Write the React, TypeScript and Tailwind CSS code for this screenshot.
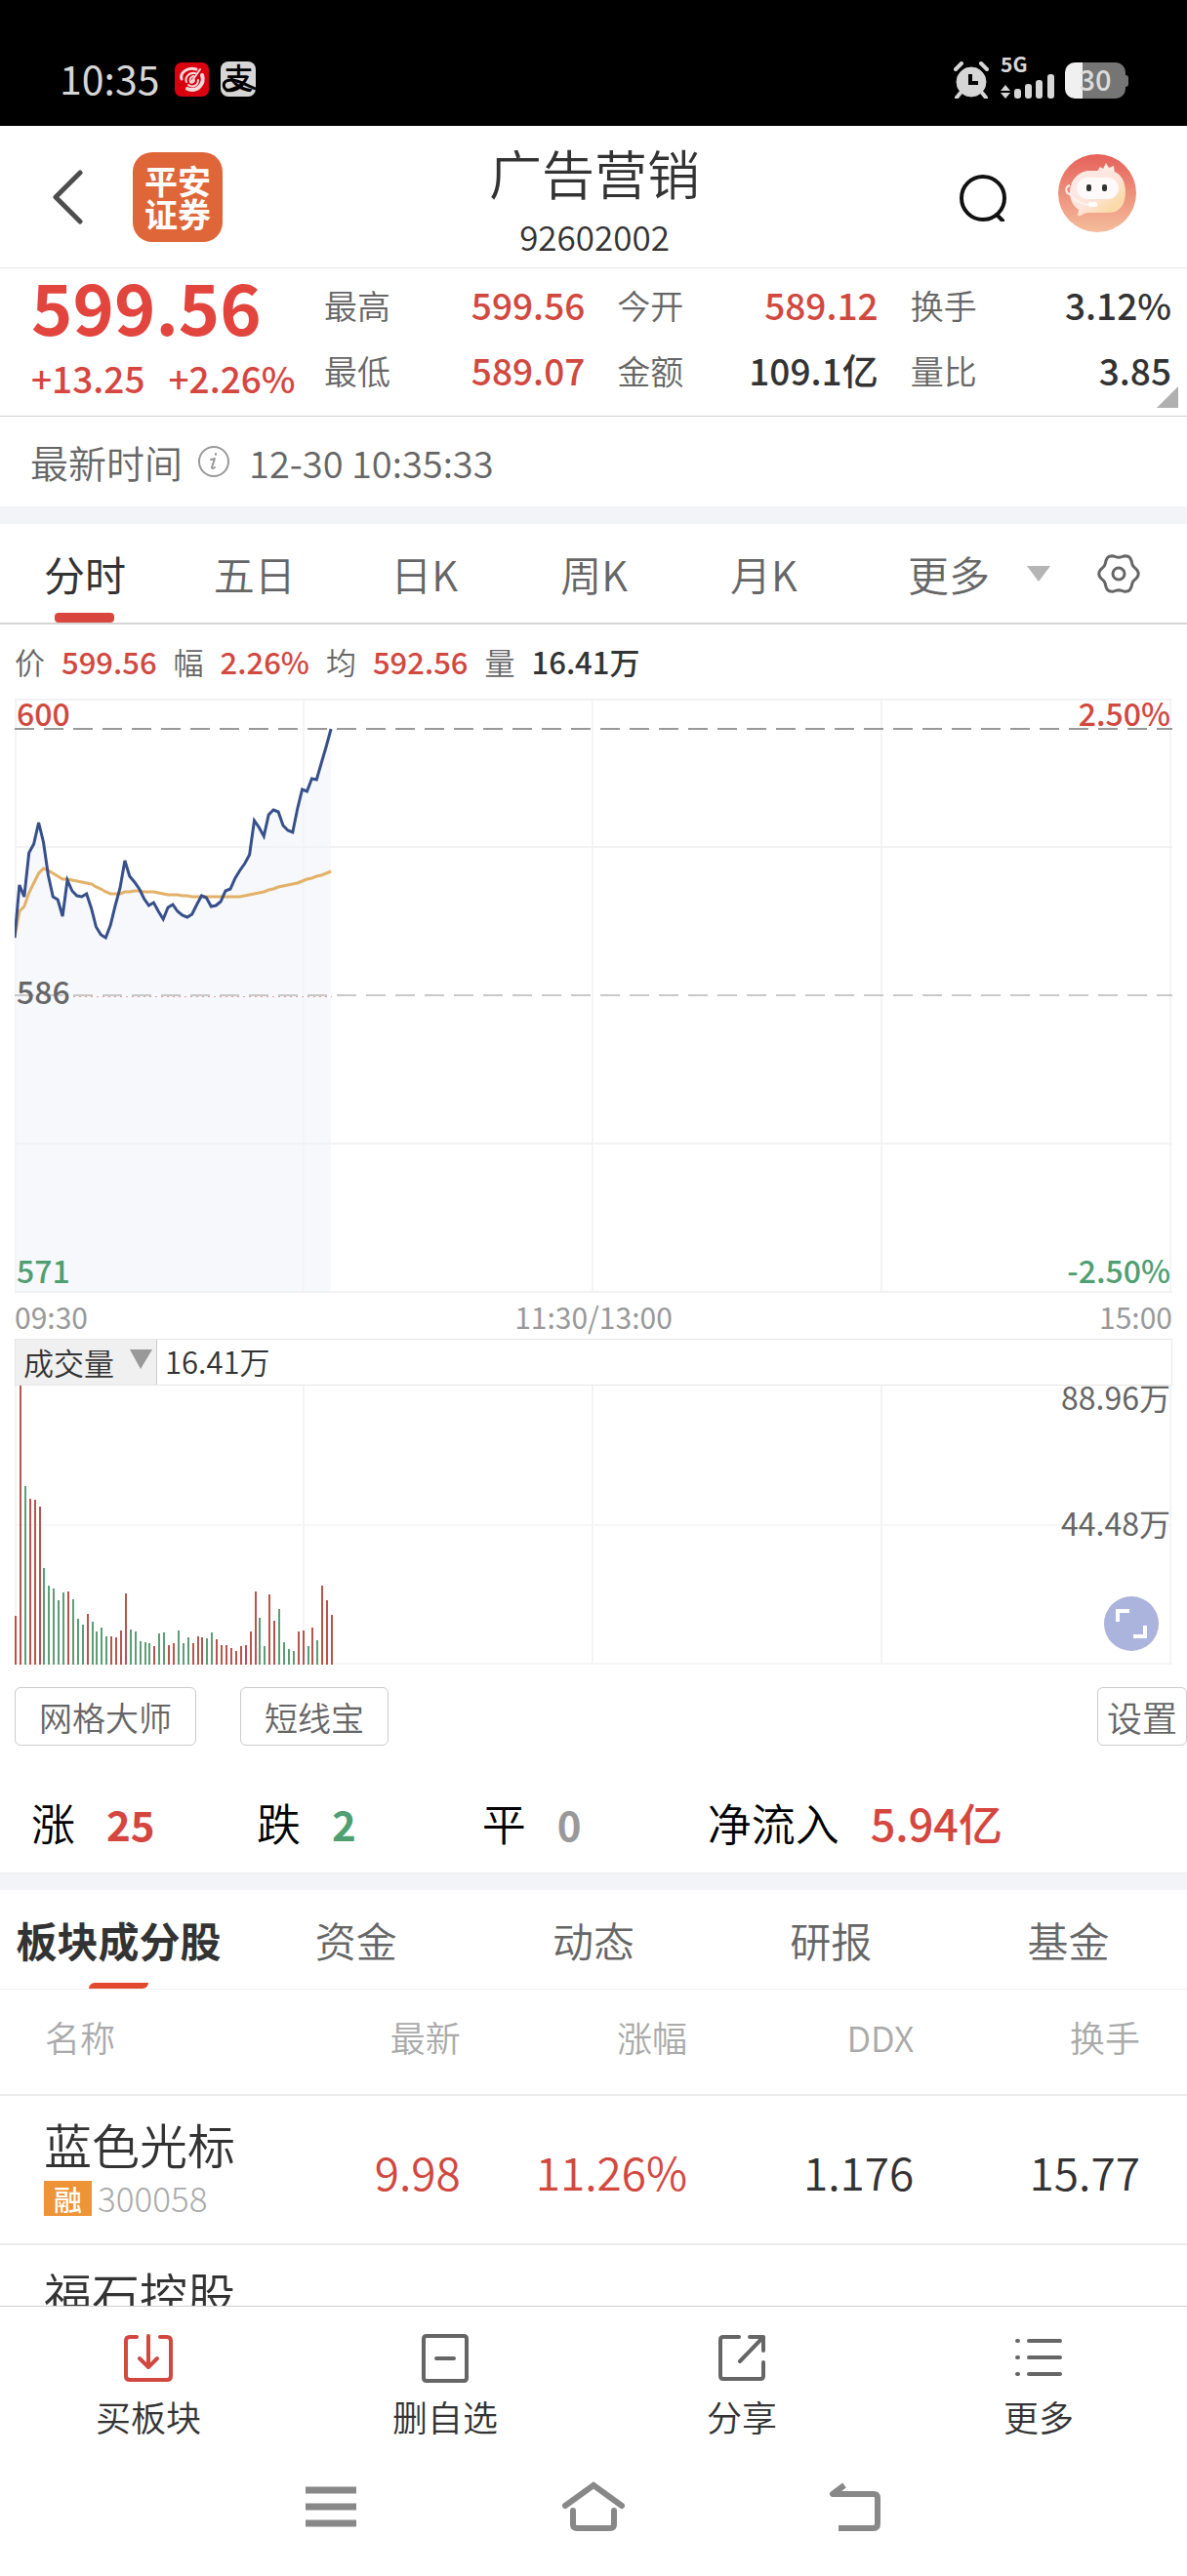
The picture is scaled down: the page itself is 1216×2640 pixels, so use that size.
import { useState } from 'react';

// one point per minute from 09:30, measured down from the top of the chart
const PRICE = [
  245, 191, 203, 158, 149, 127, 147, 181, 203, 206, 223, 186, 197, 202, 203, 200, 215, 234, 242, 245, 232, 212, 194,
  166, 182, 188, 195, 205, 212, 209, 218, 226, 214, 211, 218, 222, 224, 221, 211, 202, 204, 213, 212, 208, 197, 195,
  184, 176, 169, 160, 125, 132, 141, 119, 114, 116, 130, 135, 137, 113, 93, 95, 82, 83, 66, 49, 31
];
const AVERAGE = [
  245, 218, 213, 199, 189, 179, 174, 176, 179, 182, 185, 185, 186, 187, 188, 189, 190, 193, 195, 198, 200, 200, 200,
  198, 198, 197, 197, 198, 198, 198, 199, 200, 201, 201, 201, 202, 202, 203, 203, 203, 203, 203, 203, 203, 203, 203,
  203, 203, 202, 201, 200, 199, 198, 196, 195, 193, 192, 191, 190, 189, 187, 185, 184, 182, 181, 179, 177
];
const VOLUME = [
  50, 286, 183, 170, 169, 162, 99, 81, 78, 66, 74, 75, 67, 47, 41, 52, 44, 34, 38, 29, 29, 28, 35, 73, 36, 34, 24, 23,
  22, 19, 32, 33, 20, 22, 35, 22, 28, 22, 29, 28, 27, 33, 26, 20, 20, 17, 14, 19, 20, 34, 75, 48, 19, 72, 45, 57, 23,
  16, 14, 34, 35, 19, 38, 25, 81, 66, 51
];
const VOLUME_SIDE = 'rrgrrrgggggrgggrggggrrrrgggggrggrrgggrrrggrrrrrrrrrggrrggggrrgrgrrr';

const STEP = 4.91;
const toPoints = (list: number[]) => list.map((y, i) => `${(i * STEP).toFixed(1)},${y}`).join(' ');

const quotes = [
  { label: '最高', value: '599.56', up: true },
  { label: '今开', value: '589.12', up: true },
  { label: '换手', value: '3.12%', up: false },
  { label: '最低', value: '589.07', up: true },
  { label: '金额', value: '109.1亿', up: false },
  { label: '量比', value: '3.85', up: false }
];

const periods = ['分时', '五日', '日K', '周K', '月K'];
const sections = ['板块成分股', '资金', '动态', '研报', '基金'];

const stocks = [
  { name: '蓝色光标', code: '300058', price: '9.98', change: '11.26%', ddx: '1.176', turnover: '15.77' },
  { name: '福石控股', code: '', price: '', change: '', ddx: '', turnover: '' }
];

const StatusBar = () => (
  <div className="flex h-[129px] shrink-0 items-end justify-between bg-black pb-7 pl-[61px] pr-[60px] text-[#d6d6d6]">
    <div className="flex items-center">
      <span className="pb-1 text-[41px] leading-[36px]">10:35</span>
      <svg className="ml-4 size-[35px]" viewBox="0 0 35 35">
        <rect width="35" height="35" rx="7" fill="#d9000f" />
        <g fill="none" stroke="#f5d9d9" strokeLinecap="round">
          <path d="M22 7C13 4 5 11 7 17" strokeWidth="3" />
          <path d="M28 13c3 9-5 18-15 14" strokeWidth="4" />
          <path d="M21 11c-7-1-11 5-9 9M24 18c0 6-6 8-10 5" strokeWidth="2" />
          <path d="M26 7 17 20" strokeWidth="2" />
          <path d="M19 14c-3 1-4 4-3 6s4 0 4-2" strokeWidth="2" />
        </g>
      </svg>
      <div className="relative ml-3 size-9 rounded-lg bg-[#d6d6d6]">
        <span className="block text-center text-[30px] font-medium leading-[30px] text-black">支</span>
        <svg className="absolute inset-0 size-9" viewBox="0 0 36 36" fill="none" stroke="#000">
          <path d="M36 28C27 25 19 19 11 19c-7 0-9 4-7 8 3 5 13 3 19-4" strokeWidth="3" />
        </svg>
      </div>
    </div>
    <div className="flex items-end">
      <svg className="h-[38px] w-9" viewBox="0 0 36 38" fill="#d6d6d6" stroke="#d6d6d6">
        <circle cx="18" cy="21" r="15" />
        <path d="M2 8 8 2M34 8l-6-6M7 32l-4 5M29 32l4 5" strokeWidth="4" strokeLinecap="round" />
        <path d="M17 13v9h8" fill="none" stroke="#000" strokeWidth="4" />
      </svg>
      <div className="ml-3 flex w-14 flex-col">
        <span className="text-[21px] font-bold leading-5">5G</span>
        <svg className="h-[26px] w-14" viewBox="0 0 56 26" fill="#d6d6d6">
          <path d="M5 12 10 18H0zM5 26 0 20H10z" />
          <rect x="14" y="16" width="7" height="10" rx="3" />
          <rect x="25" y="11" width="7" height="15" rx="3" />
          <rect x="36" y="7" width="7" height="19" rx="3" />
          <rect x="48" y="1" width="7" height="25" rx="3" />
        </svg>
      </div>
      <div className="ml-2.5 flex items-center">
        <div className="flex h-[37px] w-[62px] items-center justify-center rounded-[10px] bg-[linear-gradient(to_right,#f0f0f0_29%,#757575_29%)] pb-1">
          <span className="text-[29px] font-medium leading-[33px] text-[#dcdcdc]">30</span>
        </div>
        <div className="h-3 w-[3px] rounded-r bg-[#757575]" />
      </div>
    </div>
  </div>
);

const Robot = () => (
  <svg className="size-20" viewBox="0 0 80 80">
    <defs>
      <linearGradient id="robotBack" x1="0" y1="0" x2="0" y2="1">
        <stop offset="0" stopColor="#e5615a" />
        <stop offset="1" stopColor="#f5bd9c" />
      </linearGradient>
      <linearGradient id="robotHead" x1="0" y1="0" x2="1" y2="1">
        <stop offset="0" stopColor="#ffeae6" />
        <stop offset="0.5" stopColor="#fde5dc" />
        <stop offset="0.8" stopColor="#fbd9a6" />
        <stop offset="1" stopColor="#fbe3da" />
      </linearGradient>
    </defs>
    <circle cx="40" cy="40" r="40" fill="url(#robotBack)" />
    <path d="M39 20q3-6 4-7l3 2 3-6 3 5 5-2 1 9z" fill="#ffe9e4" />
    <path
      d="M32 17h20c11 0 17 10 17 22s-6 21-17 21H31q-4 0-8 3-3 1-3-1l1-5C15 53 12 46 12 39c0-12 9-22 20-22z"
      fill="url(#robotHead)"
    />
    <rect x="19" y="24" width="43" height="22" rx="11" fill="#fffafa" />
    <rect x="29" y="31" width="5" height="7" rx="2" fill="#333" />
    <rect x="45" y="31" width="5" height="7" rx="2" fill="#333" />
    <path d="M12 32c-5 1-5 8 0 9 5 7 12 10 20 11" fill="none" stroke="#fff3ef" strokeWidth="2" />
    <rect x="31" y="49" width="9" height="5" rx="2" fill="#fff" />
  </svg>
);

const Header = () => (
  <header className="grid h-[146px] shrink-0 grid-cols-[1fr_auto_1fr] items-center border-b border-[#e8e8e8] pl-[54px] pr-[52px]">
    <div className="flex items-center gap-[50px]">
      <button aria-label="返回">
        <svg className="h-14 w-8" viewBox="0 0 32 56" fill="none" stroke="#4d4d4d" strokeWidth="5">
          <path d="M28 3 3 28l25 25" strokeLinecap="round" strokeLinejoin="round" />
        </svg>
      </button>
      <a
        href="#pingan"
        className="grid size-[92px] place-content-center rounded-[20px] bg-[#df6639] text-[34px] font-bold leading-[34px] text-white"
      >
        <span>平安</span>
        <span>证券</span>
      </a>
    </div>
    <div className="flex flex-col items-center pt-2 text-[#333]">
      <h1 className="text-[54px] font-[350] leading-[72px]">广告营销</h1>
      <p className="text-[35px] font-[350] leading-[58px]">92602002</p>
    </div>
    <div className="flex items-center justify-end gap-[52px]">
      <button aria-label="搜索">
        <svg className="size-[50px]" viewBox="0 0 50 50" fill="none" stroke="#111" strokeWidth="4">
          <circle cx="25" cy="26" r="22" />
          <path d="m39 43 6 6" strokeLinecap="round" />
        </svg>
      </button>
      <button aria-label="客服" className="mb-2">
        <Robot />
      </button>
    </div>
  </header>
);

const Quote = () => (
  <section className="relative flex h-[152px] shrink-0 border-b border-[#d0d0d0] pl-8 pr-4">
    <div className="w-[300px] shrink-0 text-[#d5463f]">
      <p className="text-[72px] font-bold leading-[76px] text-[#e2453d]">599.56</p>
      <p className="flex gap-6 text-[37px] font-medium leading-[72px]">
        <span>+13.25</span>
        <span>+2.26%</span>
      </p>
    </div>
    <dl className="grid flex-1 auto-rows-[67px] grid-cols-3 gap-x-[33px] pt-1">
      {quotes.map((q) => (
        <div key={q.label} className="flex items-center justify-between">
          <dt className="text-[34px] font-[350] text-[#666]">{q.label}</dt>
          <dd className={q.up ? 'text-[37px] font-medium text-[#d1483f]' : 'text-[37px] font-medium text-[#333]'}>
            {q.value}
          </dd>
        </div>
      ))}
    </dl>
    <svg className="absolute bottom-2 right-[9px] size-[22px]" viewBox="0 0 22 22">
      <path d="M22 0v22H0z" fill="#b0b0b0" />
    </svg>
  </section>
);

const Gear = () => {
  const outline = Array.from({ length: 72 }, (_, i) => {
    const a = (i * Math.PI) / 36;
    const r = 18.5 + 1.7 * Math.cos(6 * a);
    return `${(22 + r * Math.cos(a)).toFixed(1)},${(22 + r * Math.sin(a)).toFixed(1)}`;
  }).join(' ');
  return (
    <svg className="size-11" viewBox="0 0 44 44" fill="none" stroke="#666" strokeWidth="3">
      <polygon points={outline} strokeLinejoin="round" />
      <circle cx="22" cy="22" r="6" />
    </svg>
  );
};

const Grid = ({ height }: { height: number }) => (
  <g stroke="#f4f4f6" strokeWidth="2">
    {[1, 296, 592, 888, 1184].map((x) => (
      <path key={x} d={`M${x} 0V${height}`} />
    ))}
  </g>
);

const PriceChart = () => (
  <div className="relative mx-[15px] text-[32px] font-[450] leading-8">
    <svg className="block h-[609px] w-full" viewBox="0 0 1186 609" preserveAspectRatio="none">
      <polygon points={`0,608 ${toPoints(PRICE)} ${66 * STEP},608`} fill="#f6f8fc" />
      <Grid height={609} />
      <path d="M0 1H1186M0 152H1186M0 456H1186M0 608H1186" stroke="#f2f2f4" strokeWidth="2" />
      <path d="M0 31H1186" stroke="#999" strokeWidth="2" strokeDasharray="20 10" />
      <path d="M0 304H1186" stroke="#c8c8c8" strokeWidth="2" strokeDasharray="20 10" />
      <path d="M60 305.5H325" stroke="#e0a0a0" strokeDasharray="2 4" />
      <polyline points={toPoints(AVERAGE)} fill="none" stroke="#e3b168" strokeWidth="3" />
      <polyline points={toPoints(PRICE)} fill="none" stroke="#374f8a" strokeWidth="3" />
    </svg>
    <span className="absolute left-0.5 top-[-2px] text-[#d1483f]">600</span>
    <span className="absolute right-0.5 top-[-2px] text-[#d1483f]">2.50%</span>
    <span className="absolute left-0.5 top-[283px] text-[#666]">586</span>
    <span className="absolute bottom-2 left-0.5 text-[#4f9f72]">571</span>
    <span className="absolute bottom-2 right-0.5 text-[#4f9f72]">-2.50%</span>
  </div>
);

const VolumeChart = () => (
  <div className="relative mx-[15px] text-[32px] leading-8 text-[#666]">
    <svg className="block h-[286px] w-full" viewBox="0 0 1186 286" preserveAspectRatio="none">
      <Grid height={286} />
      <path d="M0 143H1186M0 285H1186" stroke="#f6f6f8" strokeWidth="2" />
      {VOLUME.map((v, i) => (
        <rect
          key={i}
          x={Math.round(i * STEP)}
          y={286 - v}
          width="2"
          height={v}
          fill={VOLUME_SIDE[i] === 'r' ? '#b9544d' : '#5b9d75'}
        />
      ))}
    </svg>
    <span className="absolute right-0.5 top-[-5px]">88.96万</span>
    <span className="absolute right-0.5 top-[124px]">44.48万</span>
    <button aria-label="全屏" className="absolute bottom-3.5 right-3.5">
      <svg className="size-14" viewBox="0 0 56 56" fill="none" stroke="#fff" strokeWidth="4">
        <circle cx="28" cy="28" r="28" fill="#aab4dc" stroke="none" />
        <path d="M14 26V15h12M42 30v11H30" />
      </svg>
    </button>
  </div>
);

const BottomIcons = [
  {
    label: '买板块',
    color: '#d1483f',
    path: 'M14 4H7q-4 0-4 4v36q0 4 4 4h38q4 0 4-4V8q0-4-4-4h-7M26 3v32M17 26l9 9 9-9'
  },
  { label: '删自选', color: '#666', path: 'M7 3h38q3 0 3 3v40q0 3-3 3H7q-3 0-3-3V6q0-3 3-3zM17 26h18' },
  {
    label: '分享',
    color: '#666',
    path: 'M23 4H7q-3 0-3 3v37q0 3 3 3h38q3 0 3-3V30M34 4h14v14M48 4 24 29'
  },
  { label: '更多', color: '#666', path: 'M4 8h1M4 25h1M4 42h1M16 8h32M16 25h32M16 42h32' }
];

export default function App() {
  const [period, setPeriod] = useState('分时');
  const [section, setSection] = useState('板块成分股');

  return (
    <div className="flex h-screen flex-col overflow-hidden bg-white font-['Noto_Sans_CJK_SC',sans-serif] text-[#333]">
      <StatusBar />
      <Header />
      <main className="flex min-h-0 flex-1 flex-col overflow-hidden">
        <Quote />
        <div className="flex h-[92px] shrink-0 items-center text-[#666]">
          <span className="pl-[31px] text-[39px] font-[350]">最新时间</span>
          <svg className="ml-4 size-8" viewBox="0 0 32 32" fill="none" stroke="#999" strokeWidth="2">
            <circle cx="16" cy="16" r="15" />
            <path d="m17 13-3 9q0 2 3 0M13 14l4-1M18 8v1" strokeLinecap="round" />
          </svg>
          <span className="ml-5 text-[38px] font-[350]">12-30 10:35:33</span>
        </div>
        <div className="h-[18px] shrink-0 bg-[#f3f4f8]" />

        <nav className="flex h-[103px] shrink-0 border-b-2 border-[#d4d4d4] text-[42px] font-[350] text-[#666]">
          {periods.map((p) => (
            <button
              key={p}
              onClick={() => setPeriod(p)}
              className={
                p === period
                  ? 'relative flex w-[14.3%] items-center justify-center font-normal text-[#333]'
                  : 'relative flex w-[14.3%] items-center justify-center'
              }
            >
              {p}
              {p === period && <span className="absolute bottom-0 h-2.5 w-[61px] rounded bg-[#d9463f]" />}
            </button>
          ))}
          <button className="ml-auto flex items-center gap-[38px]">
            更多
            <svg className="h-4 w-6" viewBox="0 0 24 16">
              <path d="M0 0h24L12 16z" fill="#b5b5b5" />
            </svg>
          </button>
          <button aria-label="图表设置" className="ml-12 mr-12">
            <Gear />
          </button>
        </nav>

        <div className="flex h-[76px] shrink-0 items-center gap-[17px] pl-[15px] text-[31px] font-medium text-[#d1483f]">
          <span className="font-[350] text-[#666]">价</span>
          <span>599.56</span>
          <span className="font-[350] text-[#666]">幅</span>
          <span>2.26%</span>
          <span className="font-[350] text-[#666]">均</span>
          <span>592.56</span>
          <span className="font-[350] text-[#666]">量</span>
          <span className="text-[#333]">16.41万</span>
        </div>
        <PriceChart />
        <div className="grid h-[47px] shrink-0 grid-cols-3 items-center px-[15px] pt-0.5 text-[30px] text-[#999]">
          <span>09:30</span>
          <span className="text-center">11:30/13:00</span>
          <span className="text-right">15:00</span>
        </div>
        <div className="mx-[15px] flex h-12 shrink-0 border border-[#e6e6e6] text-[31px] font-[350]">
          <div className="relative w-[145px] border-r border-[#ccc] bg-[#f0f0f0]">
            <select aria-label="副图指标" className="h-full w-full appearance-none pb-0.5 pl-2">
              <option>成交量</option>
            </select>
            <svg className="pointer-events-none absolute right-1 top-2.5 h-5 w-[23px]" viewBox="0 0 23 20">
              <path d="M0 0h23L11 20z" fill="#999" />
            </svg>
          </div>
          <span className="pl-2 leading-[44px]">16.41万</span>
        </div>
        <VolumeChart />

        <div className="mt-[23px] flex h-[60px] shrink-0 items-stretch pl-[15px] text-[34px] font-[350] text-[#666]">
          <button className="rounded-md border border-[#ccc] px-6">网格大师</button>
          <button className="ml-[45px] rounded-md border border-[#ccc] px-6">短线宝</button>
          <button className="ml-auto rounded-md border border-[#ccc] px-[9px] text-[36px]">设置</button>
        </div>

        <div className="flex h-[131px] shrink-0 items-center border-b border-[#eee] pl-8 pt-7 text-[45px] font-[350] text-black">
          <p className="flex w-[19.5%] items-center gap-8">
            涨<span className="text-[42px] font-bold text-[#d5463f]">25</span>
          </p>
          <p className="flex w-[19.5%] items-center gap-8">
            跌<span className="text-[42px] font-bold text-[#4f9f72]">2</span>
          </p>
          <p className="flex w-[19.5%] items-center gap-8">
            平<span className="text-[42px] font-bold text-[#999]">0</span>
          </p>
          <p className="flex items-center gap-8">
            净流入<span className="font-medium text-[#d5463f]">5.94亿</span>
          </p>
        </div>
        <div className="h-[17px] shrink-0 bg-[#f3f4f8]" />

        <nav className="grid h-[102px] shrink-0 grid-cols-5 border-b border-[#f0f0f0] text-[42px] font-[350] text-[#666]">
          {sections.map((s) => (
            <button
              key={s}
              onClick={() => setSection(s)}
              className={
                s === section
                  ? 'relative flex items-center justify-center font-bold text-[#333]'
                  : 'relative flex items-center justify-center'
              }
            >
              {s}
              {s === section && (
                <span className="absolute bottom-0 h-1.5 w-[61px] rounded-br-md rounded-tl-md bg-[#e2482c]" />
              )}
            </button>
          ))}
        </nav>

        <table className="w-full shrink-0 table-fixed border-collapse whitespace-nowrap text-right">
          <thead>
            <tr className="h-[108px] border-b-2 border-[#ebebeb] text-[36px] text-[#aaa]">
              <th className="pb-3 pl-[46px] text-left font-[350]">名称</th>
              <th className="pb-3 font-[350]">最新</th>
              <th className="w-[19.1%] pb-3 font-[350]">涨幅</th>
              <th className="w-[19.1%] pb-3 font-[350]">DDX</th>
              <th className="w-[23%] pb-3 pr-12 font-[350]">换手</th>
            </tr>
          </thead>
          <tbody>
            {stocks.map((s) => (
              <tr key={s.name} className="h-[153px] border-b-2 border-[#ebebeb] text-[46px] font-[350]">
                <td className="pl-[45px] text-left">
                  <p className="text-[49px] leading-[58px]">{s.name}</p>
                  <p className="flex h-[54px] items-center gap-1.5 text-[35px] font-light text-[#aaa]">
                    {s.code && (
                      <span className="bg-[#ee9336] px-2.5 text-[29px] font-medium leading-9 text-white">融</span>
                    )}
                    {s.code}
                  </p>
                </td>
                <td className="pt-1 text-[#d1483f]">{s.price}</td>
                <td className="pt-1 text-[#d1483f]">{s.change}</td>
                <td className="pt-1">{s.ddx}</td>
                <td className="pr-12 pt-1">{s.turnover}</td>
              </tr>
            ))}
          </tbody>
        </table>
      </main>

      <footer className="shrink-0 border-t border-[#ccc] bg-white">
        <nav className="grid h-[139px] grid-cols-4 pt-[27px]">
          {BottomIcons.map((b) => (
            <button key={b.label} className="flex flex-col items-center gap-1 text-[36px] font-[350] leading-[58px]">
              <svg
                className="size-[52px]"
                viewBox="0 0 52 52"
                fill="none"
                stroke={b.color}
                strokeWidth="4"
                strokeLinecap="round"
                strokeLinejoin="round"
              >
                <path d={b.path} />
              </svg>
              {b.label}
            </button>
          ))}
        </nav>
        <div className="flex h-[137px] justify-center gap-[207px] pt-[38px]">
          <button aria-label="最近任务" className="self-start">
            <svg className="h-14 w-[60px]" viewBox="0 0 60 56" stroke="#888" strokeWidth="7">
              <path d="M4 11h52M4 28h52M4 45h52" />
            </svg>
          </button>
          <button aria-label="主屏幕" className="self-start">
            <svg className="h-14 w-16" viewBox="0 0 64 56" fill="none" stroke="#888" strokeWidth="6">
              <path d="M3 27 32 6l29 21" strokeLinecap="round" />
              <path d="M11 32v14q0 4 4 4h34q4 0 4-4V32" strokeLinecap="round" />
            </svg>
          </button>
          <button aria-label="后退" className="self-start">
            <svg className="h-14 w-[60px]" viewBox="0 0 60 56" fill="none" stroke="#888" strokeWidth="6">
              <path d="M18 6 6 15h42q4 0 4 4v26q0 5-4 5H12" strokeLinejoin="round" />
            </svg>
          </button>
        </div>
      </footer>
    </div>
  );
}
